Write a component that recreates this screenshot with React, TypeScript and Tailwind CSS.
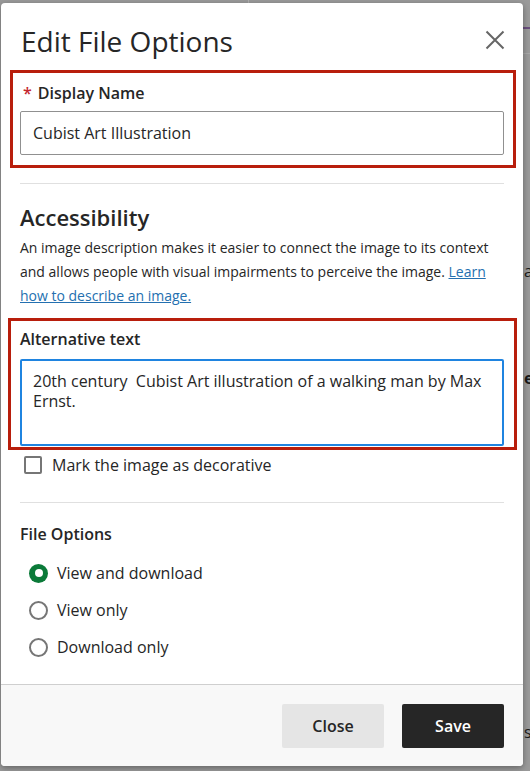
import React from "react";

function Radio({ checked, label }: { checked?: boolean; label: string }) {
  return (
    <div className="flex items-center h-[24px] ml-[9px]">
      {checked ? (
        <span className="w-[19px] h-[19px] rounded-full bg-[#0b7a39] flex items-center justify-center">
          <span className="w-[8px] h-[8px] rounded-full bg-white" />
        </span>
      ) : (
        <span className="w-[19px] h-[19px] rounded-full border-2 border-[#767676] bg-white" />
      )}
      <span className="ml-[9px] text-[16px] leading-[24px] text-[#262626]">{label}</span>
    </div>
  );
}

export default function App() {
  return (
    <div
      className="relative w-[530px] h-[771px] bg-[#9a9a9a] overflow-hidden pt-[3px] pl-[1px]"
      style={{ fontFamily: '"Open Sans", "Noto Sans", sans-serif' }}
    >
      {/* dimmed page behind the dialog */}
      <div className="absolute left-[248px] top-0 w-[1px] h-[3px] bg-[#b0b0b0]" />
      <div className="absolute right-0 top-[27px] w-[10px] h-[2px] bg-[#6a4f7e]" />
      <div className="absolute right-0 top-[53px] w-[10px] h-[1px] bg-[#a8a8a8]" />
      <span className="absolute left-[524px] top-[259px] text-[16px] leading-[24px] text-[#1a1a1a]">ar</span>
      <span className="absolute left-[524px] top-[366px] text-[16px] font-bold leading-[24px] text-[#1a1a1a]">e</span>
      <span className="absolute left-[524px] top-[720px] text-[16px] leading-[24px] text-[#1a1a1a]">s</span>

      <div className="relative w-[522px] h-[763px] bg-white rounded-[4px] shadow-[0_2px_6px_rgba(0,0,0,0.35)] flex flex-col overflow-hidden">
        <div className="flex-1 px-[19px] pt-[19px]">
          {/* header */}
          <div className="flex items-start justify-between">
            <h1 className="text-[28px] leading-[38px] font-normal text-[#262626] ml-[1px]">Edit File Options</h1>
            <button className="mt-[8px] mr-[-1px] w-[20px] h-[20px] flex items-center justify-center" aria-label="Close">
              <svg width="20" height="20" viewBox="0 0 20 20">
                <path d="M1.5 1.5 L18.5 18.5 M18.5 1.5 L1.5 18.5" stroke="#666666" strokeWidth="2" fill="none" />
              </svg>
            </button>
          </div>

          {/* display name */}
          <div className="mt-[10px] ml-[-10px] mr-[-12px] border-[3px] border-[#b81e0c] pl-[7px] pr-[9px] pt-[8px] pb-[10px]">
            <div className="text-[16px] leading-[24px] font-semibold text-[#262626]">
              <span className="text-[#c4262e] ml-[3px] mr-[6px]">*</span>Display Name
            </div>
            <div className="mt-[6px] h-[44px] border border-[#909090] rounded-[2px] flex items-center px-[12px] text-[16px] text-[#262626]">
              Cubist Art Illustration
            </div>
          </div>

          <div className="mt-[15px] h-[1px] bg-[#e0e0e0]" />

          {/* accessibility */}
          <h2 className="mt-[18px] text-[22px] leading-[30px] font-semibold text-[#262626]">Accessibility</h2>
          <p className="mt-[4px] text-[14px] leading-[24px] text-[#262626]">
            An image description makes it easier to connect the image to its context and allows people with visual
            impairments to perceive the image.{" "}
            <a className="text-[#2470b0] underline">Learn how to describe an image.</a>
          </p>

          <div className="mt-[10px] ml-[-12px] mr-[-13px] border-[3px] border-[#b81e0c] pl-[9px] pr-[10px] pt-[6px] pb-[1px]">
            <div className="text-[16px] leading-[24px] font-semibold text-[#262626]">Alternative text</div>
            <div className="mt-[8px] h-[87px] border-2 border-[#1f84e0] rounded-[2px] px-[11px] pt-[10px] text-[16px] leading-[20px] text-[#262626]">
              20th century&nbsp; Cubist Art illustration of a walking man by Max Ernst.
            </div>
          </div>

          <div className="mt-[3px] flex items-center h-[24px]">
            <span className="ml-[4px] w-[18px] h-[18px] border-2 border-[#767676] rounded-[2px] bg-white" />
            <span className="ml-[10px] text-[16px] leading-[24px] text-[#262626]">Mark the image as decorative</span>
          </div>

          <div className="mt-[25px] h-[1px] bg-[#e0e0e0]" />

          <div className="mt-[19px] text-[16px] leading-[24px] font-semibold text-[#262626]">File Options</div>
          <div className="mt-[15px] flex flex-col gap-[13px]">
            <Radio checked label="View and download" />
            <Radio label="View only" />
            <Radio label="Download only" />
          </div>
        </div>

        {/* footer */}
        <div className="border-t border-[#cfcfcf] bg-[#f8f8f8] px-[19px] pt-[19px] pb-[18px] flex justify-end gap-[18px]">
          <button className="w-[102px] h-[44px] rounded-[2px] bg-[#e5e5e5] text-[16px] font-semibold text-[#262626]">
            Close
          </button>
          <button className="w-[102px] h-[44px] rounded-[2px] bg-[#262626] text-[16px] font-semibold text-white">
            Save
          </button>
        </div>
      </div>
    </div>
  );
}
